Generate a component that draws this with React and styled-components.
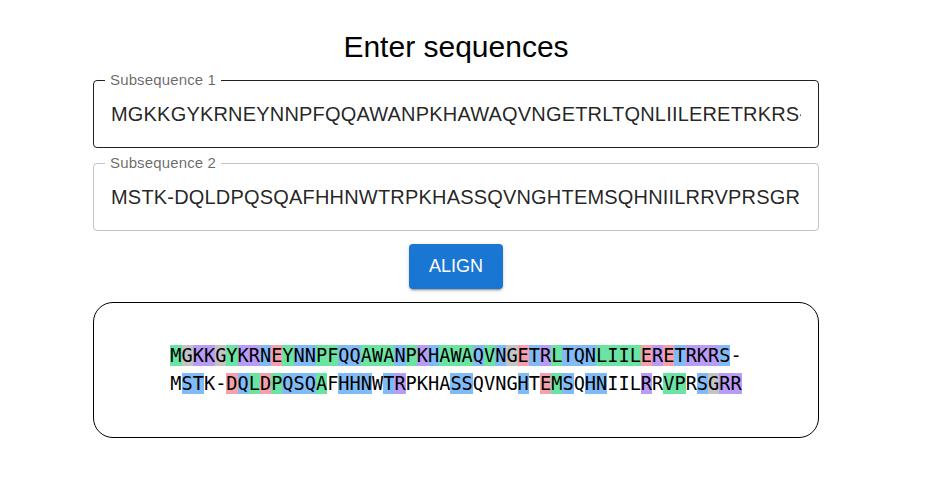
import React from "react";
import styled, { createGlobalStyle } from "styled-components";

const GlobalStyle = createGlobalStyle`
  html, body { margin: 0; padding: 0; background: #fff; }
  body { font-family: "Liberation Sans", Arial, sans-serif; color: rgba(0,0,0,0.87); }
`;

const Page = styled.main`
  width: 726px;
  margin-left: 93px;
  padding-top: 30px;
  display: flex;
  flex-direction: column;
`;

const Title = styled.h1`
  margin: 0;
  text-align: center;
  font-size: 30px;
  font-weight: 400;
  line-height: 34px;
  color: #000;
`;

const Fields = styled.div`
  margin-top: 16px;
  display: flex;
  flex-direction: column;
  gap: 15px;
`;

const Field = styled.div`
  position: relative;
  box-sizing: border-box;
  height: 68px;
  border: 1px solid ${(p) => (p.$active ? "rgba(0,0,0,0.87)" : "rgba(0,0,0,0.23)")};
  border-radius: 4px;
  padding: 0 17px;
  display: flex;
  align-items: center;
`;

const Label = styled.label`
  position: absolute;
  left: 11px;
  top: -10px;
  padding: 0 5px;
  background: #fff;
  font-size: 15px;
  line-height: 18px;
  letter-spacing: 0.00938em;
  color: rgba(0,0,0,0.6);
`;

const Input = styled.input`
  width: 100%;
  border: 0;
  outline: 0;
  padding: 0;
  margin: 0;
  background: transparent;
  font-family: "Liberation Sans", Arial, sans-serif;
  font-size: 20px;
  line-height: 24px;
  letter-spacing: 0.00938em;
  color: rgba(0,0,0,0.87);
`;

const Button = styled.button`
  align-self: center;
  margin-top: 13px;
  height: 45px;
  padding: 0 20px;
  border: 0;
  border-radius: 4px;
  background: #1976d2;
  color: #fff;
  font-family: "Liberation Sans", Arial, sans-serif;
  font-weight: 400;
  font-size: 18px;
  text-transform: uppercase;
  box-shadow: 0px 3px 1px -2px rgba(0,0,0,0.2), 0px 2px 2px 0px rgba(0,0,0,0.14), 0px 1px 5px 0px rgba(0,0,0,0.12);
  cursor: pointer;
`;

const Result = styled.section`
  margin-top: 13px;
  box-sizing: border-box;
  height: 136px;
  border: 1px solid #000;
  border-radius: 20px;
  display: flex;
  flex-direction: column;
  align-items: center;
  justify-content: center;
`;

const SeqRow = styled.div`
  font-family: "DejaVu Sans Mono", "Liberation Mono", monospace;
  font-size: 18.6px;
  line-height: 28px;
  white-space: pre;
  color: #000;
`;

const COLORS = {
  green: "#6ae3a3",
  blue: "#80bbf8",
  purple: "#b89cf7",
  red: "#f7a0ab",
  gray: "#c4c4c4",
};

const typeOf = (c) => {
  if ("AWFLIVMPYC".includes(c)) return "green";
  if ("NQSTH".includes(c)) return "blue";
  if ("KR".includes(c)) return "purple";
  if ("DE".includes(c)) return "red";
  if (c === "G") return "gray";
  return null;
};

const Residue = styled.span`
  background: ${(p) => (p.$kind ? COLORS[p.$kind] : "transparent")};
`;

const SEQ1 = "MGKKGYKRNEYNNPFQQAWANPKHAWAQVNGETRLTQNLIILERETRKRS-";
const SEQ2 = "MSTK-DQLDPQSQAFHHNWTRPKHASSQVNGHTEMSQHNIILRRVPRSGRR";

function Alignment({ a, b }) {
  return (
    <>
      <SeqRow>
        {a.split("").map((c, i) => (
          <Residue key={i} $kind={typeOf(c)}>{c}</Residue>
        ))}
      </SeqRow>
      <SeqRow>
        {b.split("").map((c, i) => (
          <Residue key={i} $kind={c !== a[i] ? typeOf(c) : null}>{c}</Residue>
        ))}
      </SeqRow>
    </>
  );
}

export default function App() {
  return (
    <>
      <GlobalStyle />
      <Page>
        <Title>Enter sequences</Title>
        <Fields>
          <Field $active>
            <Label>Subsequence 1</Label>
            <Input defaultValue={SEQ1} />
          </Field>
          <Field>
            <Label>Subsequence 2</Label>
            <Input defaultValue={SEQ2} />
          </Field>
        </Fields>
        <Button>Align</Button>
        <Result>
          <Alignment a={SEQ1} b={SEQ2} />
        </Result>
      </Page>
    </>
  );
}
